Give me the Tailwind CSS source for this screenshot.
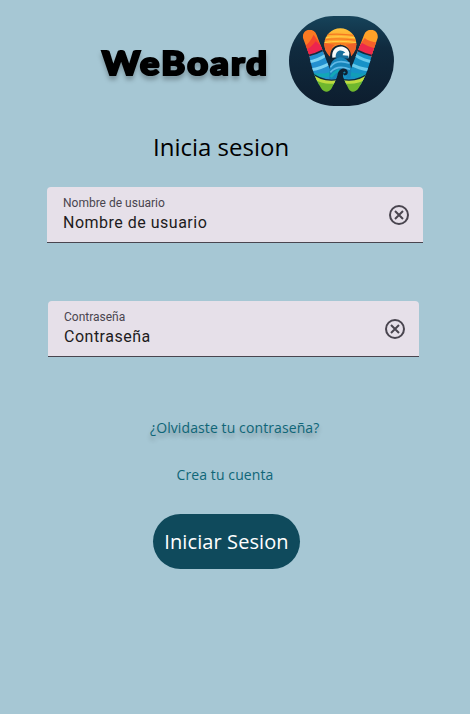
<!DOCTYPE html>
<html lang="es">
<head>
<meta charset="utf-8">
<title>WeBoard</title>
<script src="https://cdn.jsdelivr.net/npm/@tailwindcss/browser@4"></script>
</head>
<body class="bg-[#a6c7d4]">
<main class="w-[470px] h-[714px] flex flex-col overflow-hidden bg-[#a6c7d4] font-['Open_Sans',sans-serif]">
  <header class="flex pt-4 pl-[97px] h-[106px] shrink-0">
    <h1 class="w-48 h-[90px] shrink-0">
      <svg class="w-48 h-[90px] overflow-visible [filter:drop-shadow(0_4px_2px_rgb(0_0_0/0.25))]" viewBox="0 0 192 90">
        <text transform="translate(5 59.2) scale(1.13 1)" textLength="146" lengthAdjust="spacing" class="font-['Lato',sans-serif] font-black text-[32px] fill-black stroke-black stroke-[2.2px]">WeBoard</text>
      </svg>
    </h1>
    <svg class="w-[105px] h-[90px] shrink-0" viewBox="12 18 315 270" preserveAspectRatio="none">
      <defs>
        <linearGradient id="bg" x1="0" y1="0" x2="0" y2="1"><stop offset="0" stop-color="#16435a"/><stop offset=".35" stop-color="#102b3f"/><stop offset="1" stop-color="#0d1d2e"/></linearGradient>
        <linearGradient id="sun" x1="0" y1="0" x2="0" y2="1"><stop offset="0" stop-color="#ffc43d"/><stop offset=".45" stop-color="#ff9d28"/><stop offset="1" stop-color="#ef4b26"/></linearGradient>
        <clipPath id="sunClip"><circle cx="166" cy="103" r="48"/></clipPath>
        <clipPath id="left"><path d="M54 84C50 57 86 50 95 75L134 176L165 186L140 235C132 249 117 249 108 234C87 201 78 166 72 133Z"/></clipPath>
        <clipPath id="right"><path d="M278 84C282 57 246 50 237 75L198 176L166 186L190 235C196 249 211 249 221 234C243 201 253 166 261 133Z"/></clipPath>
      </defs>
      <rect x="12" y="18" width="315" height="270" rx="135" ry="135" fill="url(#bg)"/>
      <g clip-path="url(#sunClip)">
        <rect x="116" y="53" width="100" height="100" fill="url(#sun)"/>
        <path d="M117 76Q150 68 215 77M117 90Q148 83 215 91M117 105Q142 98 215 104M117 121Q142 113 215 118" fill="none" stroke="#f47a23" stroke-width="4"/>
        <path d="M117 84Q160 76 215 84M117 98Q160 90 215 98" fill="none" stroke="#ffd04a" stroke-width="3"/>
        <path d="M112 108L137 180V140Q142 112 166 104Q190 112 196 140V180L222 108L216 160H116Z" fill="#102638"/>
        <path d="M117 98L118 112L134 139Q136 112 150 105ZM215 98L214 112L199 139Q196 112 181 105Z" fill="#f0622a"/>
      </g>
      <g clip-path="url(#left)">
        <rect x="45" y="50" width="105" height="90" fill="#fb7a22"/>
        <path d="M55 112Q74 100 86 74L112 112L150 135L65 142Z" fill="#f5472c"/>
        <path d="M55 125Q80 112 92 94L121 120L70 140Z" fill="#ed244f"/>
        <path d="M60 145L122 118L170 180V225H75Z" fill="#2490cf"/>
        <path d="M68 156Q99 152 124 134M77 179Q108 176 137 158" stroke="#7cd2f2" stroke-width="9" fill="none"/>
        <path d="M82 194Q120 202 152 186" stroke="#12a7b7" stroke-width="12" fill="none"/>
        <path d="M66 138Q93 132 117 119" stroke="#102b3f" stroke-width="5" fill="none"/>
        <path d="M78 187Q110 216 156 210V250H85Z" fill="#6fb72e"/>
        <path d="M88 201Q114 220 154 215" stroke="#bfdc40" stroke-width="11" fill="none"/>
        <path d="M78 187Q110 216 158 209" stroke="#102b3f" stroke-width="4" fill="none"/>
      </g>
      <g clip-path="url(#right)">
        <rect x="180" y="50" width="105" height="90" fill="#ffa128"/>
        <path d="M279 98Q252 95 239 84L200 138L265 142Z" fill="#f5602b"/>
        <path d="M274 117Q248 110 231 99L205 130L263 141Z" fill="#ed294b"/>
        <path d="M270 145L211 118L160 180V225H257Z" fill="#1692c7"/>
        <path d="M265 156Q235 152 210 135M255 180Q221 176 193 160" stroke="#68caeb" stroke-width="9" fill="none"/>
        <path d="M250 194Q215 202 180 186" stroke="#129eb7" stroke-width="12" fill="none"/>
        <path d="M265 138Q238 132 213 119" stroke="#102b3f" stroke-width="5" fill="none"/>
        <path d="M253 187Q220 216 174 210V250H245Z" fill="#6fb72e"/>
        <path d="M243 201Q216 220 178 215" stroke="#bfdc40" stroke-width="11" fill="none"/>
        <path d="M254 187Q220 216 174 209" stroke="#102b3f" stroke-width="4" fill="none"/>
      </g>
      <path d="M135 148Q133 106 166 104Q199 106 199 148Z" fill="#0e2435"/>
      <path d="M142 143C137 101 187 101 193 129L192 143L167 140Z" fill="#f6fafa"/>
      <path d="M152 143C151 122 168 115 181 129Q173 127 173 136L190 137L191 146Z" fill="#176f9c"/>
      <path d="M133 184Q135 145 166 142Q197 145 199 184L196 205H183Q190 187 180 181C168 177 160 185 160 195L150 207H133Z" fill="#1785ba"/>
      <path d="M136 172Q153 146 194 160M136 187Q157 163 195 178" stroke="#60b9e6" stroke-width="5" fill="none"/>
      <path d="M137 201Q149 186 162 180" stroke="#12a7b7" stroke-width="8" fill="none"/>
      <path d="M144 235L157 197Q159 181 171 176C186 172 194 188 184 195Q175 199 174 190Q172 204 186 235L180 246H148Z" fill="#0e2132"/>
      <path d="M174 189Q177 181 182 187Q180 192 174 189Z" fill="#1584ad"/>
    </svg>
  </header>

  <h2 class="h-[81px] shrink-0 pt-[25px] pl-[153px] text-[24px] leading-8 text-black whitespace-nowrap"><span class="inline-block">Inicia sesion</span></h2>

  <section class="ml-[47px] w-[376px] h-14 shrink-0 flex items-center justify-between rounded-t-[4px] bg-[#e6e0e9] border-b border-[#49454f] pl-4 pr-3 font-['Roboto',sans-serif]">
    <div class="flex flex-col">
      <span class="text-[12px] leading-4 text-[#49454f]">Nombre de usuario</span>
      <span class="text-[16px] leading-6 tracking-[0.5px] text-[#1d1b20]">Nombre de usuario</span>
    </div>
    <svg class="size-6" viewBox="0 0 24 24" fill="none" stroke="#49454f" stroke-width="2"><circle cx="12" cy="12" r="9"/><path d="m8 8 8 8m0-8-8 8"/></svg>
  </section>

  <section class="mt-[58px] ml-12 w-[371px] h-14 shrink-0 flex items-center justify-between rounded-t-[4px] bg-[#e6e0e9] border-b border-[#49454f] pl-4 pr-3 font-['Roboto',sans-serif]">
    <div class="flex flex-col">
      <span class="text-[12px] leading-4 text-[#49454f]">Contraseña</span>
      <span class="text-[16px] leading-6 tracking-[0.5px] text-[#1d1b20]">Contraseña</span>
    </div>
    <svg class="size-6" viewBox="0 0 24 24" fill="none" stroke="#49454f" stroke-width="2"><circle cx="12" cy="12" r="9"/><path d="m8 8 8 8m0-8-8 8"/></svg>
  </section>

  <a class="mt-[61px] ml-[150px] self-start text-[14px] leading-5 tracking-[0.1px] text-[#0f6678] whitespace-nowrap [text-shadow:0_4px_4px_rgb(0_0_0/0.25)]">¿Olvidaste tu contraseña?</a>
  <a class="mt-[27px] ml-[176.5px] self-start text-[14px] leading-5 tracking-[0.1px] text-[#0f6678] whitespace-nowrap">Crea tu cuenta</a>
  <button class="mt-[29px] ml-[153px] w-[147px] h-[55px] shrink-0 rounded-[28px] bg-[#0f4a5c] text-[20px] tracking-[0.1px] text-white whitespace-nowrap">Iniciar Sesion</button>
</main>
</body>
</html>
